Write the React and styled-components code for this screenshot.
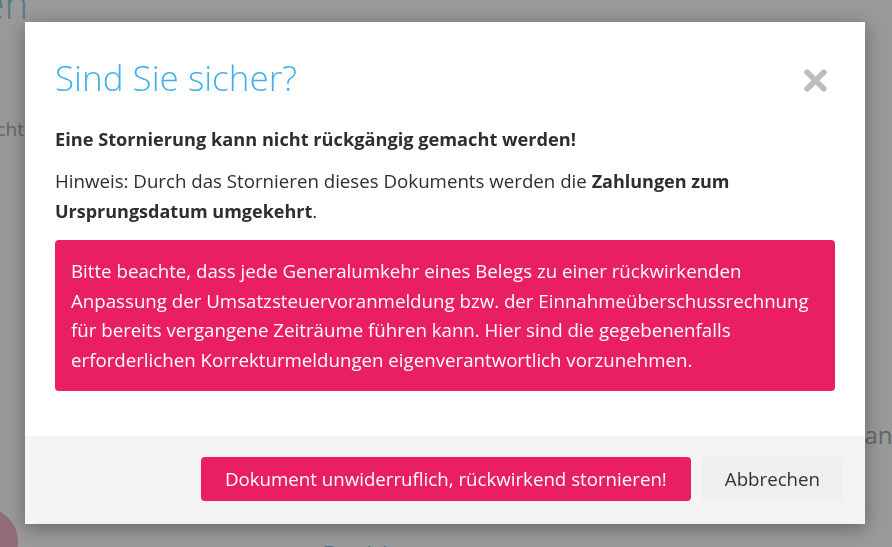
import { createGlobalStyle, styled } from 'styled-components'

const GlobalStyle = createGlobalStyle`
  html, body {
    margin: 0;
    padding: 0;
    background: #fff;
    font-family: "Open Sans", sans-serif;
    overflow: hidden;
  }
`

const Page = styled.div`
  position: relative;
  width: 892px;
  height: 547px;
  overflow: hidden;
  background: #fff;
`

/* faint page content behind the overlay, right-aligned so that it ends at the modal edge */
const EdgeText = styled.div`
  display: flex;
  justify-content: ${(p) => (p.$right ? 'flex-start' : 'flex-end')};
  width: ${(p) => (p.$right ? 60 : p.$w)}px;
  margin-top: ${(p) => p.$top}px;
  margin-left: ${(p) => p.$left || 0}px;
  white-space: nowrap;
  font-size: ${(p) => p.$size}px;
  font-weight: ${(p) => (p.$heading ? 300 : 400)};
  color: ${(p) => (p.$heading ? '#8cc9e6' : '#aaa')};
  line-height: 1;
`

const BottomLink = styled.div`
  font-size: 26px;
  color: #7fbfdd;
  margin: 92px 0 0 322px;
  line-height: 30px;
`

const Blob = styled.div`
  position: absolute;
  left: -52px;
  bottom: -30px;
  width: 70px;
  height: 70px;
  border-radius: 50%;
  background: #f4b3c8;
`

const Overlay = styled.div`
  position: fixed;
  inset: 0;
  background: rgba(0, 0, 0, 0.4);
`

const Modal = styled.div`
  width: 840px;
  margin: 22px 0 0 25px;
  background: #fff;
  box-shadow: 0 4px 18px rgba(0, 0, 0, 0.35);
  display: flex;
  flex-direction: column;
`

const Header = styled.div`
  display: flex;
  align-items: center;
  justify-content: space-between;
  padding: 36px 37px 0 30px;
`

const Title = styled.h2`
  margin: 0;
  font-family: "Open Sans", sans-serif;
  font-weight: 300;
  font-size: 35px;
  line-height: 40px;
  color: #3fb0ec;
`

const CloseButton = styled.button`
  border: 0;
  background: none;
  padding: 0;
  width: 26px;
  height: 26px;
  display: flex;
  align-items: center;
  justify-content: center;
  cursor: pointer;
  margin-top: 4px;
`

const Body = styled.div`
  padding: 26px 30px 45px;
  color: #2e2e2e;
`

const Lead = styled.p`
  margin: 0 0 12px;
  font-weight: 700;
  font-size: 18.2px;
  line-height: 30px;
`

const Note = styled.p`
  margin: 0 0 14px;
  font-size: 18.7px;
  line-height: 30px;

  b {
    font-size: 18px;
  }
`

const Alert = styled.div`
  background: #e91e63;
  color: #fff;
  border-radius: 4px;
  padding: 16px;
  line-height: 29.7px;
  font-size: 18.7px;
  white-space: nowrap;
`

const Footer = styled.div`
  background: #f4f4f4;
  height: 88px;
  box-sizing: border-box;
  display: flex;
  align-items: center;
  justify-content: flex-end;
  gap: 11px;
  padding: 0 22px 2px;
`

const Button = styled.button`
  height: 44px;
  padding: 0 ${(p) => (p.$danger ? 24 : 23)}px;
  border: 0;
  border-radius: 4px;
  font-family: "Open Sans", sans-serif;
  font-size: 18.7px;
  cursor: pointer;
  background: ${(p) => (p.$danger ? '#e91e63' : '#efefef')};
  color: ${(p) => (p.$danger ? '#fff' : '#333')};
`

function CloseIcon() {
  return (
    <svg width="25" height="25" viewBox="0 0 24 24">
      <path d="M4 4 L20 20 M20 4 L4 20" stroke="#bdbdbd" strokeWidth="5.5" strokeLinecap="round" fill="none" />
    </svg>
  )
}

export default function App() {
  return (
    <Page>
      <GlobalStyle />
      <EdgeText $heading $size={40} $w={28} $top={-16}>Belegen</EdgeText>
      <EdgeText $size={19} $w={24} $top={96}>Ansicht</EdgeText>
      <EdgeText $right $size={24} $top={284} $left={844}>Planen</EdgeText>
      <BottomLink>Positionen</BottomLink>
      <Blob />
      <Overlay>
        <Modal>
          <Header>
            <Title>Sind Sie sicher?</Title>
            <CloseButton aria-label="Schließen">
              <CloseIcon />
            </CloseButton>
          </Header>
          <Body>
            <Lead>Eine Stornierung kann nicht rückgängig gemacht werden!</Lead>
            <Note>
              Hinweis: Durch das Stornieren dieses Dokuments werden die <b>Zahlungen zum<br />Ursprungsdatum umgekehrt</b>.
            </Note>
            <Alert>
              Bitte beachte, dass jede Generalumkehr eines Belegs zu einer rückwirkenden<br />
              Anpassung der Umsatzsteuervoranmeldung bzw. der Einnahmeüberschussrechnung<br />
              für bereits vergangene Zeiträume führen kann. Hier sind die gegebenenfalls<br />
              erforderlichen Korrekturmeldungen eigenverantwortlich vorzunehmen.
            </Alert>
          </Body>
          <Footer>
            <Button $danger>Dokument unwiderruflich, rückwirkend stornieren!</Button>
            <Button>Abbrechen</Button>
          </Footer>
        </Modal>
      </Overlay>
    </Page>
  )
}
